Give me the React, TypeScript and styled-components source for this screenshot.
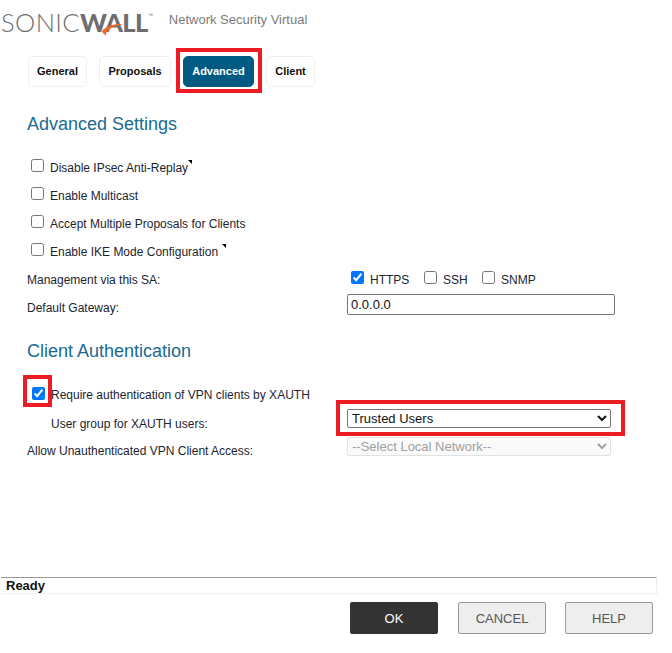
import styled, { createGlobalStyle } from "styled-components";

const GlobalStyle = createGlobalStyle`
  html, body {
    margin: 0;
    padding: 0;
    background: #fff;
    font-family: "Liberation Sans", Arial, sans-serif;
    color: #1c2430;
  }
`;

const Page = styled.div`
  width: 672px;
  height: 653px;
  display: flex;
  flex-direction: column;
  box-sizing: border-box;
`;

const Header = styled.div`
  height: 48px;
  display: flex;
  align-items: flex-start;
`;

const Logo = styled.div`
  position: relative;
  margin: 7px 0 0 1px;
  height: 30px;
  line-height: 30px;
  font-family: Lato, sans-serif;
  font-size: 25.5px;
  color: #6d6e71;
  white-space: nowrap;
`;

const LogoLight = styled.span`
  font-weight: 300;
  letter-spacing: 0.4px;
`;

const LogoBold = styled.span`
  font-weight: 900;
  letter-spacing: -0.6px;
`;

const LogoMark = styled.sup`
  position: absolute;
  top: 6px;
  left: 147px;
  font-family: "Liberation Sans", sans-serif;
  font-size: 5px;
  line-height: 5px;
`;

const Swoosh = styled.svg`
  position: absolute;
  left: 100px;
  top: 16px;
`;

const ProductName = styled.div`
  margin: 12px 0 0 21px;
  font-size: 13px;
  line-height: 15px;
  color: #7b7b7b;
`;

const Tabs = styled.div`
  display: flex;
  align-items: flex-start;
  height: 45px;
  padding-left: 28px;
`;

const Tab = styled.div<{ $active?: boolean; $width: number }>`
  box-sizing: border-box;
  width: ${(p) => p.$width}px;
  height: 31px;
  margin-top: ${(p) => (p.$active ? 0 : 8)}px;
  padding-bottom: 2px;
  display: flex;
  align-items: center;
  justify-content: center;
  border: 1px solid ${(p) => (p.$active ? "#005b82" : "#eeeeee")};
  border-radius: 5px;
  background: ${(p) => (p.$active ? "#005b82" : "#fff")};
  color: ${(p) => (p.$active ? "#fff" : "#111")};
  font-size: 11px;
  font-weight: bold;
`;

const SecondTab = styled(Tab)`
  margin-left: 12px;
`;

const TabHighlight = styled.div`
  box-sizing: border-box;
  width: 86px;
  height: 45px;
  margin: 0 4px 0 5px;
  padding: 4px 0 0 3px;
  border: 4px solid #ed1c24;
  display: flex;
  align-items: flex-start;
`;

const Section = styled.div`
  padding-left: 27px;
`;

const Heading = styled.h2<{ $top: number }>`
  margin: ${(p) => p.$top}px 0 0;
  height: 22px;
  line-height: 22px;
  font-size: 18px;
  font-weight: normal;
  color: #1a6a93;
`;

const CheckList = styled.div`
  margin-top: 19px;
`;

const CheckRow = styled.label`
  height: 28px;
  display: flex;
  align-items: center;
  padding-left: 4px;
  font-size: 12px;
`;

const Box = styled.input.attrs({ type: "checkbox" })`
  width: 13px;
  height: 13px;
  margin: 0 6px 6px 0;
  flex: none;
`;

const Corner = styled.span<{ $gap: number }>`
  width: 0;
  height: 0;
  margin: -12px 0 0 ${(p) => p.$gap}px;
  border-top: 4px solid #000;
  border-left: 4px solid transparent;
`;

const FieldRow = styled.div`
  height: 28px;
  display: grid;
  grid-template-columns: 320px 1fr;
  align-items: center;
  font-size: 12px;
`;

const Protocols = styled.div`
  display: flex;
  align-items: center;
  padding-left: 4px;
`;

const Protocol = styled.label<{ $width: number }>`
  width: ${(p) => p.$width}px;
  display: flex;
  align-items: center;
  font-size: 12px;
`;

const TextBox = styled.input`
  box-sizing: border-box;
  width: 268px;
  height: 21px;
  margin-bottom: 7px;
  padding: 0 3px;
  border: 1px solid #767676;
  border-radius: 2px;
  font-family: "Liberation Sans", sans-serif;
  font-size: 13px;
  color: #111;
`;

const AuthRow = styled.div`
  height: 32px;
  margin: 13px 0 0 -4px;
  display: flex;
  align-items: center;
  font-size: 12px;
`;

const CheckHighlight = styled.div`
  box-sizing: border-box;
  width: 29px;
  height: 32px;
  margin-right: -1px;
  border: 4px solid #ed1c24;
  display: flex;
  align-items: center;
  justify-content: center;
  & > input {
    margin: 4px 0 0 1px;
  }
`;

const UserGroupRow = styled.div`
  height: 35px;
  margin-top: -7px;
  padding-left: 24px;
  display: grid;
  grid-template-columns: 309px 289px;
  align-items: center;
  font-size: 12px;
`;

const OffsetLabel = styled.span<{ $down: number }>`
  margin-top: ${(p) => p.$down}px;
`;

const SelectHighlight = styled.div`
  box-sizing: border-box;
  width: 289px;
  height: 36px;
  margin-left: -24px;
  border: 4px solid #ed1c24;
  padding: 5px 0 0 7px;
`;

const Dropdown = styled.select`
  box-sizing: border-box;
  display: block;
  width: 264px;
  height: 19px;
  padding: 0;
  border-radius: 2px;
  font-family: "Liberation Sans", sans-serif;
  font-size: 13px;
  background: #fff;
  color: #111;
  &:disabled {
    margin-bottom: 5px;
    background: #fafafa;
    color: #a0a0a0;
    border: 1px solid #e2e2e2;
    opacity: 1;
  }
`;

const Footer = styled.div`
  margin-top: auto;
  padding: 0 0 19px 1px;
`;

const StatusBar = styled.div`
  box-sizing: border-box;
  width: 656px;
  height: 17px;
  padding-left: 5px;
  border-top: 1px solid #999;
  border-right: 1px solid #eee;
  border-bottom: 1px solid #eee;
  font-size: 13px;
  line-height: 16px;
  font-weight: bold;
  color: #111;
`;

const Actions = styled.div`
  display: flex;
  margin: 8px 0 0 349px;
  gap: 20px;
  & > button:last-child {
    margin-left: -1px;
  }
`;

const ActionButton = styled.button<{ $primary?: boolean }>`
  box-sizing: border-box;
  width: 88px;
  height: 32px;
  padding: 0;
  border-radius: 2px;
  border: 1px solid ${(p) => (p.$primary ? "#333" : "#999")};
  background: ${(p) => (p.$primary ? "#333" : "#eee")};
  color: ${(p) => (p.$primary ? "#fff" : "#555")};
  font-family: "Liberation Sans", sans-serif;
  font-size: 13px;
`;

export default function App() {
  return (
    <Page>
      <GlobalStyle />
      <Header>
        <Logo>
          <LogoLight>SONIC</LogoLight>
          <LogoBold>WALL</LogoBold>
          <LogoMark>™</LogoMark>
          <Swoosh width="23" height="14" viewBox="0 0 24 14">
            <path d="M23 1C15 0 7 2 1 8c1 2 2 3 4 5 0-3 1-5 4-7 4-3 9-4 14-5z" fill="#f26522" />
          </Swoosh>
        </Logo>
        <ProductName>Network Security Virtual</ProductName>
      </Header>
      <Tabs>
        <Tab $width={59}>General</Tab>
        <SecondTab $width={72}>Proposals</SecondTab>
        <TabHighlight>
          <Tab $active $width={71}>Advanced</Tab>
        </TabHighlight>
        <Tab $width={49}>Client</Tab>
      </Tabs>
      <Section>
        <Heading $top={20}>Advanced Settings</Heading>
        <CheckList>
          <CheckRow>
            <Box />
            Disable IPsec Anti-Replay
            <Corner $gap={0} />
          </CheckRow>
          <CheckRow>
            <Box />
            Enable Multicast
          </CheckRow>
          <CheckRow>
            <Box />
            Accept Multiple Proposals for Clients
          </CheckRow>
          <CheckRow>
            <Box />
            Enable IKE Mode Configuration
            <Corner $gap={4} />
          </CheckRow>
        </CheckList>
        <FieldRow>
          <span>Management via this SA:</span>
          <Protocols>
            <Protocol $width={73}>
              <Box defaultChecked />
              HTTPS
            </Protocol>
            <Protocol $width={58}>
              <Box />
              SSH
            </Protocol>
            <Protocol $width={60}>
              <Box />
              SNMP
            </Protocol>
          </Protocols>
        </FieldRow>
        <FieldRow>
          <span>Default Gateway:</span>
          <TextBox defaultValue="0.0.0.0" />
        </FieldRow>
        <Heading $top={18}>Client Authentication</Heading>
        <AuthRow>
          <CheckHighlight>
            <Box defaultChecked />
          </CheckHighlight>
          <OffsetLabel $down={8}>Require authentication of VPN clients by XAUTH</OffsetLabel>
        </AuthRow>
        <UserGroupRow>
          <OffsetLabel $down={11}>User group for XAUTH users:</OffsetLabel>
          <SelectHighlight>
            <Dropdown defaultValue="trusted">
              <option value="trusted">Trusted Users</option>
            </Dropdown>
          </SelectHighlight>
        </UserGroupRow>
        <FieldRow>
          <OffsetLabel $down={4}>Allow Unauthenticated VPN Client Access:</OffsetLabel>
          <Dropdown disabled>
            <option>--Select Local Network--</option>
          </Dropdown>
        </FieldRow>
      </Section>
      <Footer>
        <StatusBar>Ready</StatusBar>
        <Actions>
          <ActionButton $primary>OK</ActionButton>
          <ActionButton>CANCEL</ActionButton>
          <ActionButton>HELP</ActionButton>
        </Actions>
      </Footer>
    </Page>
  );
}
